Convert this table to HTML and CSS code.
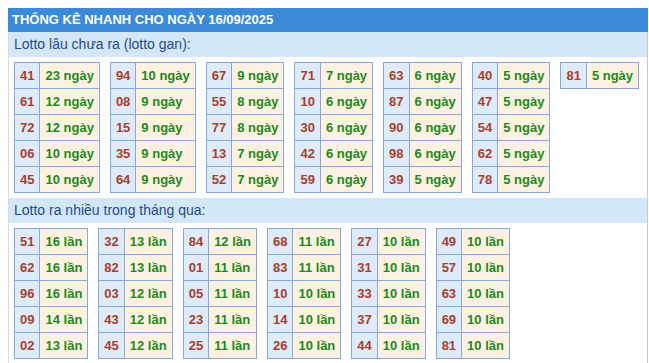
FILE: index.html
```html
<!DOCTYPE html>
<html lang="vi">
<head>
<meta charset="utf-8">
<title>Thống kê nhanh</title>
<link rel="stylesheet" href="styles.css">
</head>
<body>
<div class="box">
  <div class="title">THỐNG KÊ NHANH CHO NGÀY 16/09/2025</div>
  <div class="sub">Lotto lâu chưa ra (lotto gan):</div>
  <div class="grid">
    <table class="t"><tr><td class="n">41</td><td class="v">23 ngày</td></tr><tr><td class="n">61</td><td class="v">12 ngày</td></tr><tr><td class="n">72</td><td class="v">12 ngày</td></tr><tr><td class="n">06</td><td class="v">10 ngày</td></tr><tr><td class="n">45</td><td class="v">10 ngày</td></tr></table>
    <table class="t"><tr><td class="n">94</td><td class="v">10 ngày</td></tr><tr><td class="n">08</td><td class="v">9 ngày</td></tr><tr><td class="n">15</td><td class="v">9 ngày</td></tr><tr><td class="n">35</td><td class="v">9 ngày</td></tr><tr><td class="n">64</td><td class="v">9 ngày</td></tr></table>
    <table class="t"><tr><td class="n">67</td><td class="v">9 ngày</td></tr><tr><td class="n">55</td><td class="v">8 ngày</td></tr><tr><td class="n">77</td><td class="v">8 ngày</td></tr><tr><td class="n">13</td><td class="v">7 ngày</td></tr><tr><td class="n">52</td><td class="v">7 ngày</td></tr></table>
    <table class="t"><tr><td class="n">71</td><td class="v">7 ngày</td></tr><tr><td class="n">10</td><td class="v">6 ngày</td></tr><tr><td class="n">30</td><td class="v">6 ngày</td></tr><tr><td class="n">42</td><td class="v">6 ngày</td></tr><tr><td class="n">59</td><td class="v">6 ngày</td></tr></table>
    <table class="t"><tr><td class="n">63</td><td class="v">6 ngày</td></tr><tr><td class="n">87</td><td class="v">6 ngày</td></tr><tr><td class="n">90</td><td class="v">6 ngày</td></tr><tr><td class="n">98</td><td class="v">6 ngày</td></tr><tr><td class="n">39</td><td class="v">5 ngày</td></tr></table>
    <table class="t"><tr><td class="n">40</td><td class="v">5 ngày</td></tr><tr><td class="n">47</td><td class="v">5 ngày</td></tr><tr><td class="n">54</td><td class="v">5 ngày</td></tr><tr><td class="n">62</td><td class="v">5 ngày</td></tr><tr><td class="n">78</td><td class="v">5 ngày</td></tr></table>
    <table class="t"><tr><td class="n">81</td><td class="v">5 ngày</td></tr></table>
  </div>
  <div class="sub">Lotto ra nhiều trong tháng qua:</div>
  <div class="grid">
    <table class="t"><tr><td class="n">51</td><td class="v">16 lần</td></tr><tr><td class="n">62</td><td class="v">16 lần</td></tr><tr><td class="n">96</td><td class="v">16 lần</td></tr><tr><td class="n">09</td><td class="v">14 lần</td></tr><tr><td class="n">02</td><td class="v">13 lần</td></tr></table>
    <table class="t"><tr><td class="n">32</td><td class="v">13 lần</td></tr><tr><td class="n">82</td><td class="v">13 lần</td></tr><tr><td class="n">03</td><td class="v">12 lần</td></tr><tr><td class="n">43</td><td class="v">12 lần</td></tr><tr><td class="n">45</td><td class="v">12 lần</td></tr></table>
    <table class="t"><tr><td class="n">84</td><td class="v">12 lần</td></tr><tr><td class="n">01</td><td class="v">11 lần</td></tr><tr><td class="n">05</td><td class="v">11 lần</td></tr><tr><td class="n">23</td><td class="v">11 lần</td></tr><tr><td class="n">25</td><td class="v">11 lần</td></tr></table>
    <table class="t"><tr><td class="n">68</td><td class="v">11 lần</td></tr><tr><td class="n">83</td><td class="v">11 lần</td></tr><tr><td class="n">10</td><td class="v">10 lần</td></tr><tr><td class="n">14</td><td class="v">10 lần</td></tr><tr><td class="n">26</td><td class="v">10 lần</td></tr></table>
    <table class="t"><tr><td class="n">27</td><td class="v">10 lần</td></tr><tr><td class="n">31</td><td class="v">10 lần</td></tr><tr><td class="n">33</td><td class="v">10 lần</td></tr><tr><td class="n">37</td><td class="v">10 lần</td></tr><tr><td class="n">44</td><td class="v">10 lần</td></tr></table>
    <table class="t"><tr><td class="n">49</td><td class="v">10 lần</td></tr><tr><td class="n">57</td><td class="v">10 lần</td></tr><tr><td class="n">63</td><td class="v">10 lần</td></tr><tr><td class="n">69</td><td class="v">10 lần</td></tr><tr><td class="n">81</td><td class="v">10 lần</td></tr></table>
  </div>
</div>
</body>
</html>
```

FILE: styles.css
```css
html, body {
  margin: 0;
  padding: 0;
  background: #ffffff;
}
body {
  padding: 8px 0 0 8px;
  font-family: "Liberation Sans", Arial, sans-serif;
}
.box {
  width: 640px;
  box-sizing: border-box;
  border-left: 1px solid #d6dce4;
  border-right: 1px solid #c4cad3;
  padding-bottom: 20px;
}
.title {
  height: 24px;
  line-height: 24px;
  background: #3b8ad9;
  color: #ffffff;
  font-weight: bold;
  font-size: 13px;
  padding-left: 4px;
  margin-left: -1px;
  margin-right: -1px;
}
.sub {
  height: 25px;
  line-height: 25px;
  background: #d4e7fa;
  color: #1d4b8e;
  font-size: 14px;
  padding-left: 5px;
}
.grid {
  display: flex;
  flex-wrap: wrap;
  align-items: flex-start;
  gap: 10px;
  padding: 5px 5px 5px 5px;
}
.t {
  border-collapse: collapse;
  font-size: 13px;
  font-weight: bold;
}
.t td {
  border: 1px solid #86a7df;
  height: 25px;
  padding: 0 5px;
  line-height: 25px;
  white-space: nowrap;
  box-sizing: border-box;
}
.n {
  background: #deebfb;
  color: #a9402c;
}
.v {
  background: #fdf2e2;
  color: #1b8a1b;
}
```
